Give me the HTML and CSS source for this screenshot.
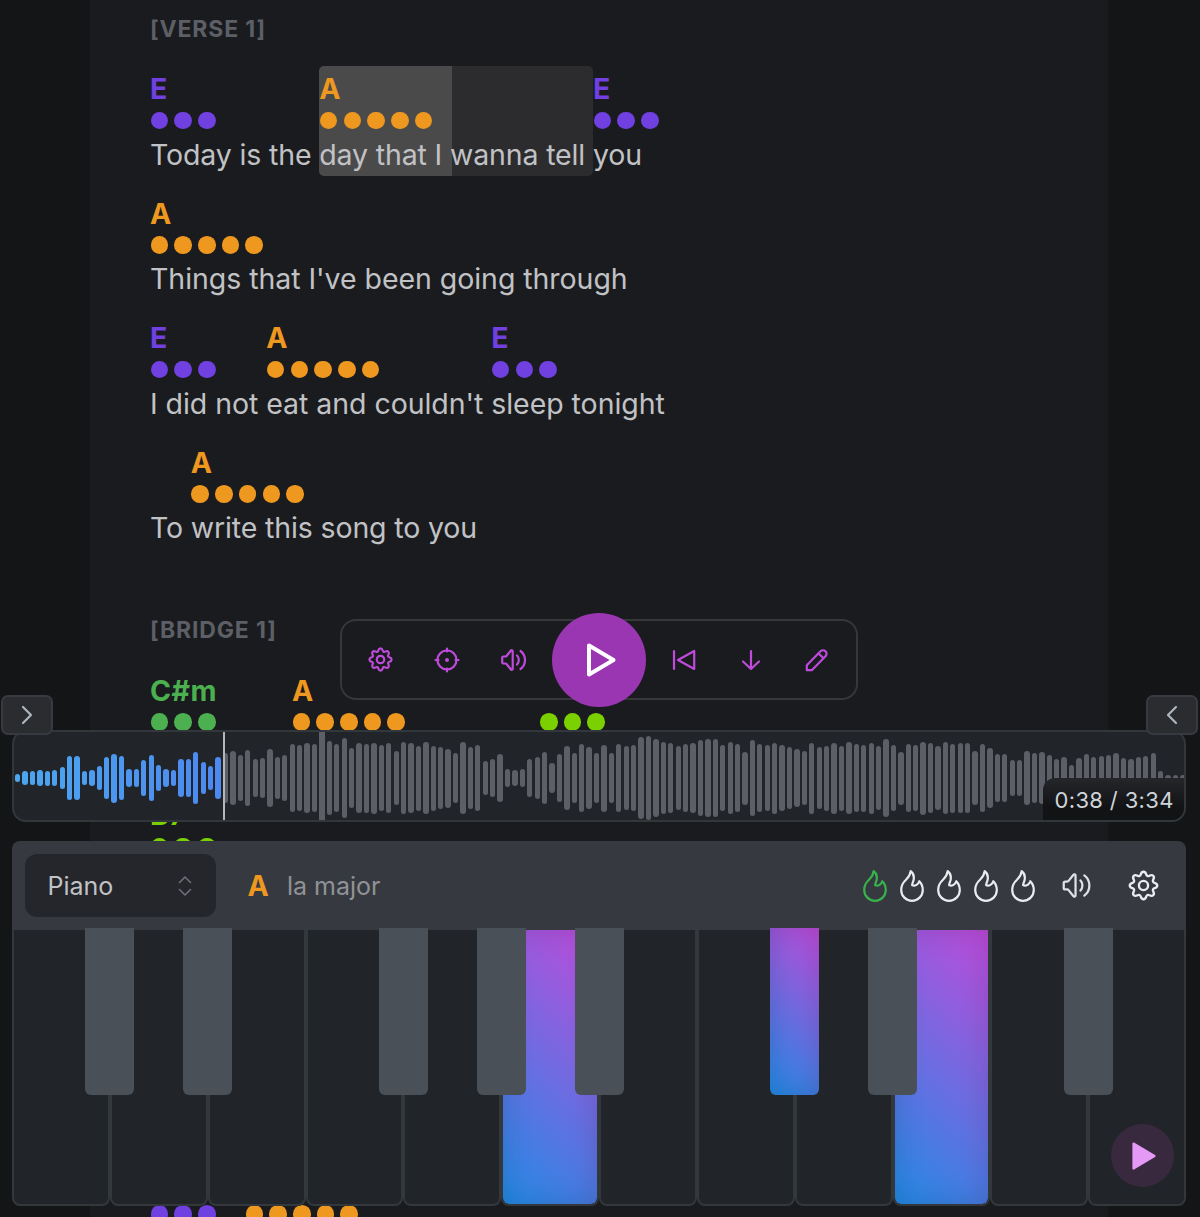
FILE: index.html
```html
<!DOCTYPE html>
<html lang="en">
<head>
  <meta charset="UTF-8">
  <title>Song player</title>
  <link rel="stylesheet" href="styles.css">
</head>
<body>

  <svg class="sprite">
    <symbol id="gear" viewBox="-12.5 -12.5 25 25"><path d="M11.090 0Q11.090 1.560 8.970 2.200Q6.840 2.830 7.890 4.790Q8.940 6.740 7.840 7.840Q6.740 8.940 4.790 7.890Q2.830 6.840 2.200 8.970Q1.560 11.090 0 11.090Q-1.560 11.090 -2.200 8.970Q-2.830 6.840 -4.790 7.890Q-6.740 8.940 -7.840 7.840Q-8.940 6.740 -7.890 4.790Q-6.840 2.830 -8.970 2.200Q-11.090 1.560 -11.090 0Q-11.090 -1.560 -8.970 -2.200Q-6.840 -2.830 -7.890 -4.790Q-8.940 -6.740 -7.840 -7.840Q-6.740 -8.940 -4.790 -7.890Q-2.830 -6.840 -2.200 -8.970Q-1.560 -11.090 0 -11.090Q1.560 -11.090 2.200 -8.970Q2.830 -6.840 4.790 -7.890Q6.740 -8.940 7.840 -7.840Q8.940 -6.740 7.890 -4.790Q6.840 -2.830 8.970 -2.200Q11.090 -1.560 11.090 0Z"/><circle r="3.700"/></symbol>
    <symbol id="sound" viewBox="0 0 26 24"><path d="M2.500 8.500h1.800c.6 0 1-.3 1.400-.8l4-5c.8-1 2-.6 2 .6v17.400c0 1.200-1.200 1.600-2 .6l-4-5c-.4-.5-.8-.8-1.400-.8H2.500c-.8 0-1.300-.5-1.300-1.300V9.800c0-.8.5-1.300 1.300-1.300zM16 7.500c2.400 2.200 2.400 6.800 0 9M19.500 3c6 4.500 6 13.500 0 18"/></symbol>
    <symbol id="flame" viewBox="0 0 24 32"><path d="M10.700 1.200C13.200 3 14.200 6 13.700 9.300C13.400 11.800 11.800 13.800 12.200 15.300C15.200 16.300 18.300 14.500 19.300 11.200C21.500 13.500 22.800 16.500 22.800 20A10.800 10.800 0 0 1 1.200 20C1.200 15.500 3 12.500 6 9.800C9 7 10.300 4.500 10.700 1.200Z"/></symbol>
  </svg>

  <main class="sheet">
    <section class="part">
      <h2>[VERSE 1]</h2>
      <div class="line first-line">
        <div class="seg purple"><b>E</b><p class="dots"><i></i><i></i><i></i></p><span>Today is the </span></div>
        <div class="seg orange current"><b>A</b><p class="dots"><i></i><i></i><i></i><i></i><i></i></p><span>day that I wanna tell </span></div>
        <div class="seg purple"><b>E</b><p class="dots"><i></i><i></i><i></i></p><span>you</span></div>
      </div>
      <div class="line">
        <div class="seg orange"><b>A</b><p class="dots"><i></i><i></i><i></i><i></i><i></i></p><span>Things that I've been going through</span></div>
      </div>
      <div class="line">
        <div class="seg purple"><b>E</b><p class="dots"><i></i><i></i><i></i></p><span>I did not </span></div>
        <div class="seg orange"><b>A</b><p class="dots"><i></i><i></i><i></i><i></i><i></i></p><span>eat and couldn't </span></div>
        <div class="seg purple"><b>E</b><p class="dots"><i></i><i></i><i></i></p><span>sleep tonight</span></div>
      </div>
      <div class="line first-line">
        <div class="seg"><b></b><p class="dots"></p><span>To </span></div>
        <div class="seg orange"><b>A</b><p class="dots"><i></i><i></i><i></i><i></i><i></i></p><span>write this song to you</span></div>
      </div>
    </section>

    <section class="part">
      <h2>[BRIDGE 1]</h2>
      <div class="line bridge-line">
        <div class="seg green"><b>C#m</b><p class="dots"><i></i><i></i><i></i></p></div>
        <div class="seg orange"><b>A</b><p class="dots"><i></i><i></i><i></i><i></i><i></i></p></div>
        <div class="seg lime"><b></b><p class="dots"><i></i><i></i><i></i></p></div>
      </div>
      <div class="line">
        <div class="seg lime"><b>B7</b><p class="dots"><i></i><i></i><i></i></p></div>
      </div>
    </section>

    <section class="part last-part">
      <div class="line last-line">
        <div class="seg purple"><b></b><p class="dots"><i></i><i></i><i></i></p></div>
        <div class="seg orange"><b></b><p class="dots"><i></i><i></i><i></i><i></i><i></i></p></div>
      </div>
    </section>
  </main>

  <div class="controls">
    <button><svg class="icon-gear"><use href="#gear"/></svg></button>
    <button><svg class="icon" viewBox="0 0 26 26"><circle cx="13" cy="13" r="9.500"/><path d="M13 1.500v3M13 21.500v3M1.500 13h3M21.500 13h3"/><circle class="solid" cx="13" cy="13" r="2"/></svg></button>
    <button><svg class="icon-sound"><use href="#sound"/></svg></button>
    <button class="play"><svg viewBox="0 0 32 36"><path d="M4 3.500L28.500 18L4 32.500Z"/></svg></button>
    <button><svg class="icon" viewBox="0 0 26 26"><path d="M3 4v18M23.200 4v18L7 13Z"/></svg></button>
    <button><svg class="icon" viewBox="0 0 26 26"><path d="M13 4v18M5 14.500L13 22L21 14.500"/></svg></button>
    <button><svg class="icon" viewBox="0 0 26 26"><path d="M2.800 23.200v-5L16.500 4.300a3.500 3.500 0 0 1 5 5L7.800 23.200ZM14.500 6.300l5 5"/></svg></button>
  </div>

  <button class="tab tab-left"><svg viewBox="0 0 12 20"><path d="M2 2l8 8-8 8"/></svg></button>
  <button class="tab tab-right"><svg viewBox="0 0 12 20"><path d="M10 2l-8 8 8 8"/></svg></button>

  <div class="dock">
    <div class="wave">
      <div class="bars" id="bars"></div>
      <div class="cursor"></div>
      <div class="time">0:38 / 3:34</div>
    </div>

    <div class="piano">
      <div class="piano-bar">
        <div class="select">Piano <svg viewBox="0 0 14 20"><path d="M1.500 6.500L7 1l5.500 5.500M1.500 13.500L7 19l5.500-5.500"/></svg></div>
        <b class="chord">A</b>
        <span class="chord-name">la major</span>
        <div class="levels">
          <svg class="on"><use href="#flame"/></svg>
          <svg><use href="#flame"/></svg>
          <svg><use href="#flame"/></svg>
          <svg><use href="#flame"/></svg>
          <svg><use href="#flame"/></svg>
        </div>
        <svg class="volume"><use href="#sound"/></svg>
        <svg class="settings"><use href="#gear"/></svg>
      </div>
      <div class="keys">
        <div class="key"><div class="black"></div></div>
        <div class="key"><div class="black"></div></div>
        <div class="key"></div>
        <div class="key"><div class="black"></div></div>
        <div class="key"><div class="black"></div></div>
        <div class="key active"><div class="black"></div></div>
        <div class="key"></div>
        <div class="key"><div class="black active"></div></div>
        <div class="key"><div class="black"></div></div>
        <div class="key active"></div>
        <div class="key"><div class="black"></div></div>
        <div class="key"></div>
      </div>
      <button class="play-chord"><svg viewBox="0 0 26 30"><path d="M2.500 2.500L23.500 15L2.500 27.500Z"/></svg></button>
    </div>
  </div>

  <script src="script.js"></script>
</body>
</html>
```

FILE: styles.css
```css
* {
  box-sizing: border-box;
}
body {
  margin: 0;
  height: 1217px;
  overflow: hidden;
  background-color: #141517;
  color: #c1c2c5;
  font-family: Inter, "Liberation Sans", sans-serif;
}
button {
  display: flex;
  align-items: center;
  justify-content: center;
  padding: 0;
  border: none;
  background: none;
  color: inherit;
  cursor: pointer;
}
svg {
  display: block;
  flex: none;
  fill: none;
  stroke: currentColor;
  stroke-width: 2.2;
  stroke-linecap: round;
  stroke-linejoin: round;
}
.sprite {
  position: absolute;
  width: 0;
  height: 0;
}

/* song text */
.sheet {
  height: 1217px;
  margin: 0 92px 0 90px;
  padding: 14.5px 0 0 60px;
  overflow: hidden;
  background-color: #1a1b1e;
}
.part {
  padding-bottom: 52px;
}
h2 {
  margin: 0 0 22.5px;
  font-size: 23px;
  line-height: 29px;
  letter-spacing: .85px;
  color: #5c5f66;
}
.line {
  display: flex;
  height: 109.5px;
  margin-bottom: 15px;
}
.seg b {
  display: block;
  height: 45.6px;
  font-size: 28.5px;
  line-height: 46.4px;
}
.seg span {
  display: block;
  margin-top: 2.5px;
  font-size: 28.5px;
  line-height: 45px;
  letter-spacing: -.05px;
  color: #c1c2c5;
  white-space: pre;
}
.first-line span {
  letter-spacing: -.14px;
}
.dots {
  display: flex;
  gap: 6.1px;
  height: 17.6px;
  margin: 0;
  padding-left: .6px;
}
.dots i {
  width: 17.6px;
  height: 17.6px;
  border-radius: 50%;
  background-color: currentColor;
}
.current {
  border-radius: 5px;
  background: linear-gradient(90deg, #4a4a4b 48.5%, #2c2c2e 48.5%);
}
.purple { color: #7040e0; }
.orange { color: #ee9820; }
.green { color: #4caf50; }
.lime { color: #7bd000; }
.green b {
  letter-spacing: .5px;
}
.bridge-line {
  display: grid;
  grid-template-columns: 142px 247.5px 100px;
}
.last-part {
  padding-top: 191px;
}
.last-line {
  display: grid;
  grid-template-columns: 95px 200px;
}

/* player controls */
.controls {
  position: fixed;
  left: 340px;
  top: 619px;
  display: flex;
  align-items: center;
  justify-content: center;
  width: 518px;
  height: 81px;
  border: 2px solid #36373b;
  border-radius: 16px;
  background-color: #1a1b1e;
  color: #be4bdb;
}
.controls button {
  width: 66.6px;
  height: 61px;
}
.controls .play {
  width: 94px;
  height: 94px;
  margin: 0 5px;
  border-radius: 50%;
  background-color: #9b36b3;
  color: white;
}
.play svg {
  width: 32px;
  height: 36px;
  margin-left: 3px;
  stroke-width: 4;
}
.icon {
  width: 26px;
  height: 26px;
}
.icon .solid {
  fill: currentColor;
  stroke: none;
}
.icon-gear {
  width: 25px;
  height: 25px;
}
.icon-sound {
  width: 26px;
  height: 24px;
}

.tab {
  position: fixed;
  top: 695px;
  z-index: 2;
  width: 52px;
  height: 40px;
  border: 2px solid #373a40;
  border-radius: 7px;
  background-color: #2a2c30;
  color: #adb5bd;
}
.tab svg {
  width: 12px;
  height: 20px;
}
.tab-left { left: 1px; }
.tab-right { right: 2px; }

/* waveform and piano */
.dock {
  position: fixed;
  left: 12px;
  right: 14px;
  bottom: 11px;
  display: flex;
  flex-direction: column;
  gap: 19px;
}
.wave {
  position: relative;
  height: 92px;
  border: 2px solid #32373c;
  border-radius: 14px;
  background-color: #212529;
  overflow: hidden;
}
.bars {
  display: flex;
  align-items: center;
  gap: 2.14px;
  height: 92px;
  padding-left: 1px;
}
.bars i {
  flex: none;
  width: 5.3px;
  border-radius: 3px;
  background-color: #5c5f66;
}
.bars .mark {
  border-radius: 0;
}
.cursor {
  position: absolute;
  left: 209px;
  top: 0;
  width: 2px;
  height: 100%;
  background-color: #b4b6b8;
}
.time {
  position: absolute;
  right: 0;
  bottom: 0;
  width: 141px;
  height: 42px;
  padding-left: 11.5px;
  border-radius: 12px 0 0 0;
  background: linear-gradient(#25262a, #121315 70%);
  color: #ced4da;
  font-size: 22px;
  line-height: 44px;
  letter-spacing: .35px;
  white-space: nowrap;
}
.piano {
  position: relative;
}
.piano-bar {
  display: flex;
  align-items: center;
  height: 89px;
  padding: 0 26px 0 13px;
  border-radius: 8px 8px 0 0;
  background-color: #363a40;
  font-size: 25px;
}
.select {
  display: flex;
  align-items: center;
  justify-content: space-between;
  width: 190.5px;
  height: 63px;
  padding: 0 24px 0 22.5px;
  border-radius: 12px;
  background-color: #25262b;
}
.select svg {
  width: 14px;
  height: 20px;
  stroke-width: 1.6;
  color: #6c6f75;
}
.chord {
  width: 39.5px;
  margin-left: 32px;
  font-size: 28.5px;
  color: #ee9820;
}
.chord-name {
  color: #909296;
}
.levels {
  display: flex;
  gap: 13px;
  margin-left: auto;
  color: #e9ecef;
}
.levels svg {
  width: 24px;
  height: 32px;
}
.levels .on {
  color: #37b24d;
}
.volume {
  width: 30px;
  height: 27px;
  margin-left: 27px;
  color: #dee2e6;
  stroke-width: 2;
}
.settings {
  width: 31px;
  height: 31px;
  margin: 0 1px 0 36px;
  color: #e9ecef;
  stroke-width: 1.9;
}
.keys {
  display: grid;
  grid-template-columns: repeat(12, 1fr);
  height: 276px;
}
.key {
  position: relative;
  border: 2px solid #33383d;
  border-top: none;
  border-radius: 0 0 8px 8px;
  background-color: #212529;
}
.black {
  position: absolute;
  z-index: 1;
  top: -2px;
  right: -26.5px;
  width: 49px;
  height: 167px;
  border-radius: 0 0 6px 6px;
  background-color: #495057;
}
.active {
  background: linear-gradient(45deg, #228be6, #be4bdb) padding-box;
  box-shadow: inset 0 0 30px rgba(0, 0, 0, .15);
}
.play-chord {
  position: absolute;
  right: 12.5px;
  bottom: 19px;
  width: 63px;
  height: 63px;
  border-radius: 50%;
  background-color: #38293f;
  color: #e599f7;
}
.play-chord svg {
  width: 26px;
  height: 30px;
  margin-left: 4px;
  fill: currentColor;
}
```

FILE: script.js
```js
// bar heights in thirds of a pixel
const levels = [
  26, 42, 44, 47, 45, 48, 68, 134, 133, 44, 49, 72, 124, 147, 131, 54, 55, 108, 138, 79,
  52, 48, 112, 113, 154, 97, 71, 127, 148, 163, 136, 168, 114, 122, 176, 124, 139, 205, 200, 211,
  204, 276, 224, 206, 242, 182, 208, 207, 213, 197, 211, 162, 215, 211, 195, 216, 195, 184, 177, 150,
  216, 185, 199, 101, 116, 144, 56, 50, 56, 112, 128, 157, 91, 146, 193, 149, 206, 187, 149, 201,
  148, 202, 193, 199, 247, 253, 233, 215, 209, 191, 206, 210, 229, 235, 236, 200, 215, 205, 159, 226,
  204, 199, 213, 197, 186, 174, 161, 213, 187, 195, 213, 195, 215, 206, 201, 213, 193, 236, 198, 159,
  204, 196, 219, 212, 192, 216, 207, 211, 212, 162, 204, 179, 146, 144, 106, 108, 160, 150, 156, 138,
  114, 126, 80, 120, 142, 126, 134, 138, 152, 120, 116, 128, 130, 152, 42, 18, 18, 18
];
const played = 28;
const bars = document.getElementById("bars");

levels.forEach((level, i) => {
  const bar = document.createElement("i");
  bar.style.height = level / 3 + "px";
  if (i < played) {
    bar.style.backgroundColor = `hsl(${207 + i * 0.4}, 85%, 62%)`;
  }
  if (i === 41) {
    bar.className = "mark";
  }
  bars.appendChild(bar);
});
```
